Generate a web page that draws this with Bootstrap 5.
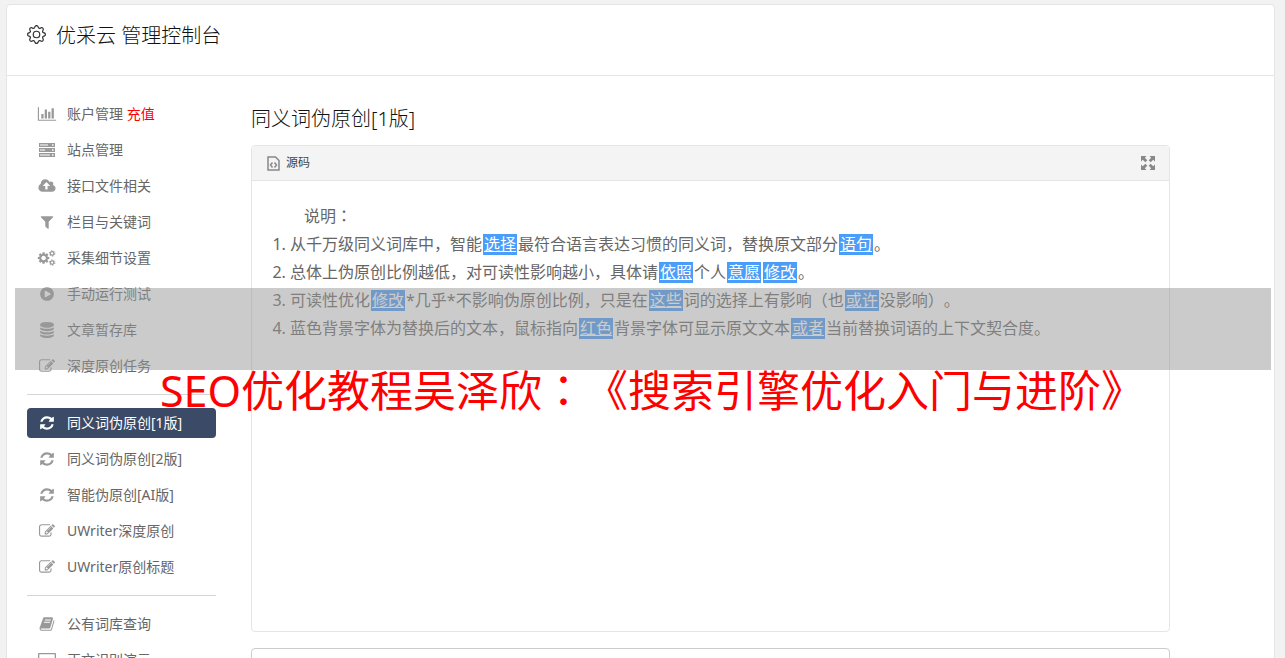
<!DOCTYPE html>
<html lang="zh-CN">
<head>
<meta charset="utf-8">
<meta name="viewport" content="width=device-width, initial-scale=1">
<title>优采云 管理控制台</title>
<link href="https://cdn.jsdelivr.net/npm/bootstrap@5.3.0/dist/css/bootstrap.min.css" rel="stylesheet">
<style>
body{background:#f2f2f2;color:#555;font-family:"Noto Sans","Noto Sans CJK SC",sans-serif;font-size:14px;line-height:20px;text-spacing-trim:space-all;font-feature-settings:"chws" 0,"halt" 0}
.console{margin:4px 10px 0 6px;border-color:#e5e5e5!important;border-radius:4px 4px 0 0}
.console-head{height:71px;padding:0 20px 8px;gap:10px;border-color:#e5e5e5!important}
.console-head svg{margin-bottom:4px}
.console-head h1,.page-title{font-size:20px;line-height:24px;font-weight:300;color:#111}
.page-title{margin:31px 0 14px}
.side{width:189px;padding-top:23px}
.side .nav-link{height:30px;padding:0 10px;gap:10px;color:#666;border-radius:4px;margin-bottom:6px}
.side .nav-link.active{background:#3b4a66;color:#fff}
.side .nav-link svg{width:20px;height:16px;fill:#999}
.side .nav-link.active svg{fill:#fff}
.side hr{margin:7px 0 13px;border-color:#d5d5d5;opacity:1}
.pay{color:red}
.workspace{padding:0 84px 0 35px}
.editor{border:1px solid #e5e5e5;border-radius:4px;height:487px}
.editor-bar{height:35px;background:#f4f4f4;border-bottom:1px solid #e5e5e5;padding:0 13px 0 15px}
.tool{font-size:12px;line-height:18px;color:#444;gap:6px}
.editor-text{padding:20px;font-size:16px;line-height:28px;color:#666}
.editor-text p{padding-left:32px}
.editor-text ol{padding-left:18px}
.swap{background:#4a9df8;color:#fff;padding:0 1px;margin:0 1px;line-height:21px;display:inline-block;text-decoration:underline}
.mid{font-family:"Noto Sans CJK TC",sans-serif}
.result{height:90px;border-color:#ccc;border-radius:4px}
.veil{top:288px;left:15px;right:14px;height:82px;background:rgba(151,151,151,.5);pointer-events:none}
.headline{top:358px;left:160px;font-size:43px;line-height:60px;color:red;white-space:nowrap;pointer-events:none}
</style>
</head>
<body>
<svg class="d-none" aria-hidden="true">
<symbol id="i-chart" viewBox="0 0 2048 1792"><path d="M640 896v512h-256v-512h256zm384-512v1024h-256v-1024h256zm1024 1152v128h-2048v-1536h128v1408h1920zm-640-896v768h-256v-768h256zm384-384v1152h-256v-1152h256z"/></symbol>
<symbol id="i-server" viewBox="0 0 18 16"><path fill-rule="evenodd" d="M1 1h16v4H1zM2 2.400v1h8v-1zM14 2.200v1.500h1.500V2.200zM1 6h16v4H1zM2 7.400v1h5v-1zM14 7.200v1.500h1.500V7.200zM1 11h16v4H1zM2 12.400v1h10v-1zM14 12.200v1.500h1.500v-1.500z"/></symbol>
<symbol id="i-cloud" viewBox="0 0 1920 1792"><path d="M1280 864q0-14-9-23l-352-352q-9-9-23-9t-23 9l-351 351q-10 12-10 24 0 14 9 23t23 9h224v352q0 13 9.500 22.500t22.500 9.500h192q13 0 22.500-9.500t9.500-22.500v-352h224q13 0 22.500-9.500t9.500-22.500zm640 288q0 159-112.500 271.500t-271.500 112.500h-1088q-185 0-316.500-131.500t-131.500-316.500q0-130 70-240t188-165q-2-30-2-43 0-212 150-362t362-150q156 0 285.500 87t188.500 231q71-62 166-62 106 0 181 75t75 181q0 76-41 138 130 31 213.500 135.500t83.500 238.500z"/></symbol>
<symbol id="i-filter" viewBox="0 0 1792 1792"><path d="M1595 295q17 41-14 70l-493 493v742q0 42-39 59-13 5-25 5-27 0-45-19l-256-256q-19-19-19-45v-486l-493-493q-31-29-14-70 17-39 59-39h1280q42 0 59 39z"/></symbol>
<symbol id="i-cogs" viewBox="0 0 1920 1792"><path d="M832 896q0-106-75-181t-181-75-181 75-75 181 75 181 181 75 181-75 75-181zm384-91v185q0 10-7 19.500t-16 10.500l-155 24q-11 35-32 76 34 48 90 115 7 11 7 20 0 12-7 19-23 30-82.500 89.500t-78.500 59.500q-11 0-21-7l-115-90q-37 19-77 31-11 108-23 155-7 24-30 24h-186q-11 0-20-7.500t-10-17.500l-23-153q-34-10-75-31l-118 89q-7 7-20 7-11 0-21-8-144-133-144-160 0-9 7-19 10-14 41-53t47-61q-23-44-35-82l-152-24q-10-1-17-9.500t-7-19.500v-185q0-10 7-19.500t16-10.500l155-24q11-35 32-76-34-48-90-115-7-11-7-20 0-12 7-20 22-30 82-89t79-59q11 0 21 7l115 90q34-18 77-32 11-108 23-154 7-24 30-24h186q11 0 20 7.500t10 17.500l23 153q34 10 75 31l118-89q8-7 20-7 11 0 21 8 144 133 144 160 0 8-7 19-12 16-42 54t-45 60q23 48 34 82l152 23q10 2 17 10.500t7 19.500z"/><g fill="none" stroke="#999"><circle cx="1536" cy="384" r="200" stroke-width="140"/><circle cx="1536" cy="384" r="310" stroke-width="110" stroke-dasharray="162"/><circle cx="1536" cy="1408" r="200" stroke-width="140"/><circle cx="1536" cy="1408" r="310" stroke-width="110" stroke-dasharray="162"/></g></symbol>
<symbol id="i-play" viewBox="0 0 1792 1792"><path d="M896 128q209 0 385.500 103t279.500 279.500 103 385.500-103 385.500-279.500 279.500-385.500 103-385.500-103-279.500-279.500-103-385.500 103-385.500 279.500-279.500 385.500-103zm384 823q32-18 32-55t-32-55l-544-320q-31-19-64-1-32 19-32 55v640q0 36 32 55 16 8 32 8 17 0 32-9z"/></symbol>
<symbol id="i-db" viewBox="0 0 1792 1792"><path d="M896 768q237 0 443-43t325-127v170q0 69-103 128t-280 93.500-385 34.500-385-34.500-280-93.500-103-128v-170q119 84 325 127t443 43zm0 768q237 0 443-43t325-127v170q0 69-103 128t-280 93.500-385 34.500-385-34.500-280-93.500-103-128v-170q119 84 325 127t443 43zm0-384q237 0 443-43t325-127v170q0 69-103 128t-280 93.500-385 34.500-385-34.500-280-93.500-103-128v-170q119 84 325 127t443 43zm0-1152q208 0 385 34.500t280 93.500 103 128v128q0 69-103 128t-280 93.500-385 34.500-385-34.500-280-93.500-103-128v-128q0-69 103-128t280-93.500 385-34.500z"/></symbol>
<symbol id="i-edit" viewBox="0 0 1792 1792"><path d="M888 1184l116-116-152-152-116 116v56h96v96h56zm440-720q-16-16-33 1l-350 350q-17 17-1 33t33-1l350-350q17-17 1-33zm80 594v190q0 119-84.500 203.500t-203.500 84.500h-832q-119 0-203.500-84.500t-84.500-203.500v-832q0-119 84.500-203.500t203.500-84.500h832q63 0 117 25 15 7 18 23 3 17-9 29l-49 49q-14 14-32 8-23-6-45-6h-832q-66 0-113 47t-47 113v832q0 66 47 113t113 47h832q66 0 113-47t47-113v-126q0-13 9-22l64-64q15-15 35-7t20 29zm-96-738l288 288-672 672h-288v-288zm444 132l-92 92-288-288 92-92q28-28 68-28t68 28l152 152q28 28 28 68t-28 68z"/></symbol>
<symbol id="i-sync" viewBox="0 0 1792 1792"><path d="M1639 1056q0 5-1 7-64 268-268 434.500t-478 166.500q-146 0-282.500-55t-243.500-157l-129 129q-19 19-45 19t-45-19-19-45v-448q0-26 19-45t45-19h448q26 0 45 19t19 45-19 45l-137 137q71 66 161 102t187 36q134 0 250-65t186-179q11-17 53-117 8-23 30-23h192q13 0 22.500 9.500t9.500 22.500zm25-800v448q0 26-19 45t-45 19h-448q-26 0-45-19t-19-45 19-45l138-138q-148-137-349-137-134 0-250 65t-186 179q-11 17-53 117-8 23-30 23h-199q-13 0-22.500-9.500t-9.500-22.500v-7q65-268 270-434.500t480-166.500q146 0 284 55.500t245 156.500l130-129q19-19 45-19t45 19 19 45z"/></symbol>
<symbol id="i-book" viewBox="0 0 1792 1792"><path d="M1703 478q40 57 18 129l-275 906q-19 64-76.500 107.500t-122.500 43.500h-923q-77 0-148.500-53.500t-99.500-131.500q-24-67-2-127 0-4 3-27t4-37q1-8-3-21.500t-3-19.500q2-11 8-21t16.500-23.500 16.500-23.500q23-38 45-91.500t30-91.500q3-10 .5-30t-.5-28q3-11 17-28t17-23q21-36 42-92t25-90q1-9-2.500-32t.5-28q4-13 22-30.500t22-22.500q19-26 42.500-84.500t27.500-96.500q1-8-3-25.500t-2-26.500q2-8 9-18t18-23 17-21q8-12 16.500-30.500t15-35 16-36 19.500-32 26.500-23.500 36-11.500 47.500 5.500l-1 3q38-9 51-9h761q74 0 114 56t18 130l-274 906q-36 119-71.500 153.500t-128.500 34.500h-869q-27 0-38 15-11 16-1 43 24 70 144 70h923q29 0 56-15.500t35-41.500l300-987q7-22 5-57 38 15 59 43zm-1064 2q-4 13 2 22.500t20 9.500h608q13 0 25.500-9.500t16.500-22.500l21-64q4-13-2-22.500t-20-9.500h-608q-13 0-25.500 9.500t-16.500 22.500zm-83 256q-4 13 2 22.500t20 9.500h608q13 0 25.500-9.500t16.500-22.500l21-64q4-13-2-22.500t-20-9.500h-608q-13 0-25.500 9.500t-16.500 22.500z"/></symbol>
<symbol id="i-screen" viewBox="0 0 18 16"><path fill-rule="evenodd" d="M1 1h16q1 0 1 1v10q0 1-1 1h-6v2h2v1H5v-1h2v-2H1q-1 0-1-1V2q0-1 1-1zm.3 1.300v8h15.400v-8z"/></symbol>
</svg>
<div class="vh-100 overflow-hidden position-relative">
<div class="console bg-white border">
<header class="console-head d-flex align-items-center border-bottom">
<svg width="19" height="19" viewBox="0 0 16 16" fill="#333" aria-hidden="true"><path d="M8 4.754a3.246 3.246 0 1 0 0 6.492 3.246 3.246 0 0 0 0-6.492M5.754 8a2.246 2.246 0 1 1 4.492 0 2.246 2.246 0 0 1-4.492 0"/><path d="M9.796 1.343c-.527-1.790-3.065-1.790-3.592 0l-.094.319a.873.873 0 0 1-1.255.520l-.292-.160c-1.640-.892-3.433.902-2.540 2.541l.159.292a.873.873 0 0 1-.520 1.255l-.319.094c-1.790.527-1.790 3.065 0 3.592l.319.094a.873.873 0 0 1 .520 1.255l-.160.292c-.892 1.640.901 3.434 2.541 2.540l.292-.159a.873.873 0 0 1 1.255.520l.094.319c.527 1.790 3.065 1.790 3.592 0l.094-.319a.873.873 0 0 1 1.255-.520l.292.160c1.640.893 3.434-.902 2.540-2.541l-.159-.292a.873.873 0 0 1 .520-1.255l.319-.094c1.790-.527 1.790-3.065 0-3.592l-.319-.094a.873.873 0 0 1-.520-1.255l.160-.292c.893-1.640-.902-3.433-2.541-2.540l-.292.159a.873.873 0 0 1-1.255-.520zm-2.633.283c.246-.835 1.428-.835 1.674 0l.094.319a1.873 1.873 0 0 0 2.693 1.115l.291-.160c.764-.415 1.600.420 1.184 1.185l-.159.292a1.873 1.873 0 0 0 1.116 2.692l.318.094c.835.246.835 1.428 0 1.674l-.319.094a1.873 1.873 0 0 0-1.115 2.693l.160.291c.415.764-.420 1.600-1.185 1.184l-.291-.159a1.873 1.873 0 0 0-2.693 1.116l-.094.318c-.246.835-1.428.835-1.674 0l-.094-.319a1.873 1.873 0 0 0-2.692-1.115l-.292.160c-.764.415-1.600-.420-1.184-1.185l.159-.291A1.873 1.873 0 0 0 1.945 8.930l-.319-.094c-.835-.246-.835-1.428 0-1.674l.319-.094A1.873 1.873 0 0 0 3.060 4.377l-.160-.292c-.415-.764.420-1.600 1.185-1.184l.292.159a1.873 1.873 0 0 0 2.692-1.115z"/></svg>
<h1 class="mb-0">优采云 管理控制台</h1>
</header>
<div class="d-flex px-3 mx-1">
<nav class="side flex-shrink-0 nav flex-column flex-nowrap" aria-label="主菜单">
<a href="#" class="nav-link d-flex align-items-center"><svg><use href="#i-chart"/></svg><span>账户管理 <span class="pay">充值</span></span></a>
<a href="#" class="nav-link d-flex align-items-center"><svg><use href="#i-server"/></svg><span>站点管理</span></a>
<a href="#" class="nav-link d-flex align-items-center"><svg><use href="#i-cloud"/></svg><span>接口文件相关</span></a>
<a href="#" class="nav-link d-flex align-items-center"><svg><use href="#i-filter"/></svg><span>栏目与关键词</span></a>
<a href="#" class="nav-link d-flex align-items-center"><svg><use href="#i-cogs"/></svg><span>采集细节设置</span></a>
<a href="#" class="nav-link d-flex align-items-center"><svg><use href="#i-play"/></svg><span>手动运行测试</span></a>
<a href="#" class="nav-link d-flex align-items-center"><svg><use href="#i-db"/></svg><span>文章暂存库</span></a>
<a href="#" class="nav-link d-flex align-items-center"><svg><use href="#i-edit"/></svg><span>深度原创任务</span></a>
<hr>
<a href="#" class="nav-link active d-flex align-items-center" aria-current="page"><svg><use href="#i-sync"/></svg><span>同义词伪原创[1版]</span></a>
<a href="#" class="nav-link d-flex align-items-center"><svg><use href="#i-sync"/></svg><span>同义词伪原创[2版]</span></a>
<a href="#" class="nav-link d-flex align-items-center"><svg><use href="#i-sync"/></svg><span>智能伪原创[AI版]</span></a>
<a href="#" class="nav-link d-flex align-items-center"><svg><use href="#i-edit"/></svg><span>UWriter深度原创</span></a>
<a href="#" class="nav-link d-flex align-items-center"><svg><use href="#i-edit"/></svg><span>UWriter原创标题</span></a>
<hr>
<a href="#" class="nav-link d-flex align-items-center"><svg><use href="#i-book"/></svg><span>公有词库查询</span></a>
<a href="#" class="nav-link d-flex align-items-center"><svg><use href="#i-screen"/></svg><span>正文识别演示</span></a>
</nav>
<main class="workspace flex-grow-1">
<h2 class="page-title">同义词伪原创[1版]</h2>
<section class="editor overflow-hidden mb-3">
<div class="editor-bar d-flex align-items-center justify-content-between">
<button type="button" class="tool btn p-0 border-0 d-flex align-items-center"><svg width="13" height="16" viewBox="0 0 13 16" fill="none" stroke="#888" stroke-width="1.500" aria-hidden="true"><path d="M1 2h7.500L12 5.500V15H1zM5.500 7.500L3.500 10l2 2.500M7.500 7.500l2 2.500-2 2.500"/></svg>源码</button>
<button type="button" class="btn p-0 border-0 d-flex" aria-label="全屏"><svg width="16" height="16" viewBox="0 0 16 16" fill="#888" aria-hidden="true"><path d="M1 1h5.500L4.800 2.800 7.300 5.300 5.300 7.300 2.800 4.800 1 6.500zM15 1H9.500l1.700 1.800L8.700 5.300l2 2 2.500-2.500L15 6.500zM1 15h5.500l-1.700-1.800 2.500-2.500-2-2-2.500 2.500L1 9.500zM15 15H9.500l1.700-1.800-2.500-2.500 2-2 2.500 2.500L15 9.500z"/></svg></button>
</div>
<div class="editor-text">
<p class="mb-0">说明<span class="mid" lang="zh-TW">：</span></p>
<ol class="mb-0">
<li>从千万级同义词库中，智能<span class="swap">选择</span>最符合语言表达习惯的同义词，替换原文部分<span class="swap">语句</span>。</li>
<li>总体上伪原创比例越低，对可读性影响越小，具体请<span class="swap">依照</span>个人<span class="swap">意愿</span><span class="swap">修改</span>。</li>
<li>可读性优化<span class="swap">修改</span>*几乎*不影响伪原创比例，只是在<span class="swap">这些</span>词的选择上有影响（也<span class="swap">或许</span>没影响）。</li>
<li>蓝色背景字体为替换后的文本，鼠标指向<span class="swap">红色</span>背景字体可显示原文文本<span class="swap">或者</span>当前替换词语的上下文契合度。</li>
</ol>
</div>
</section>
<textarea class="result form-control" aria-label="处理结果"></textarea>
</main>
</div>
</div>
<div class="veil position-absolute"></div>
<div class="headline position-absolute">SEO优化教程吴泽欣<span class="mid" lang="zh-TW">：</span>《搜索引擎优化入门与进阶》</div>
</div>
<script src="https://cdn.jsdelivr.net/npm/bootstrap@5.3.0/dist/js/bootstrap.bundle.min.js"></script>
</body>
</html>
